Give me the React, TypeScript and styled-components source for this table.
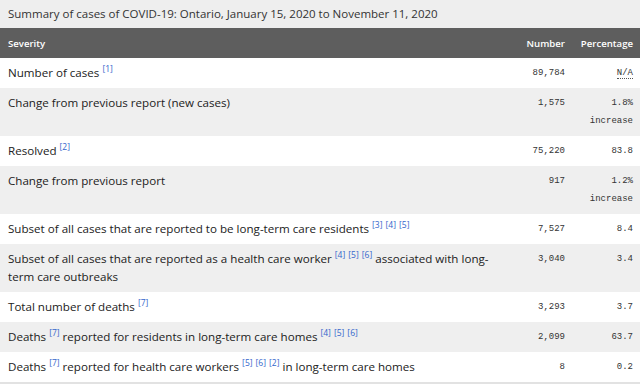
import React from "react"
import styled, { createGlobalStyle } from "styled-components"

const GlobalStyle = createGlobalStyle`
    body {
        margin: 0;
        background: #ffffff;
        font-family: "Open Sans", "Liberation Sans", sans-serif;
    }
`

const Table = styled.table`
    width: 640px;
    border-collapse: collapse;
    table-layout: fixed;
    border-bottom: 2px solid #e2e2e2;
`

const Caption = styled.caption`
    text-align: left;
    background-color: #eeeeee;
    color: #333333;
    font-size: 11.5px;
    line-height: 28px;
    padding: 0 8px;
`

const Th = styled.th<{ $right?: boolean }>`
    background-color: #5e5e5e;
    color: #ffffff;
    font-size: 9.6px;
    font-weight: 600;
    height: 30px;
    padding: 0 7px 0 8px;
    text-align: ${(p) => (p.$right ? "right" : "left")};
`

const Tr = styled.tr<{ $striped: boolean }>`
    background-color: ${(p) => (p.$striped ? "#efefef" : "#ffffff")};
`

const Label = styled.td`
    color: #222222;
    font-size: 11.6px;
    line-height: 18px;
    padding: 6px 8px 6px 8px;
    vertical-align: top;
`

const Num = styled.td`
    color: #333333;
    font-family: "Liberation Mono", "DejaVu Sans Mono", monospace;
    font-size: 9px;
    line-height: 18px;
    padding: 6px 7px 6px 8px;
    text-align: right;
    vertical-align: top;
`

const Sup = styled.sup`
    color: #3366cc;
    font-size: 8.5px;
    line-height: 0;
`

const Abbr = styled.span`
    border-bottom: 1px dotted #555555;
`

type Row = {
    label: React.ReactNode
    number: string
    pct: React.ReactNode
}

const Ref = ({ n }: { n: number }) => <Sup>[{n}]</Sup>

const rows: Row[] = [
    { label: <>Number of cases <Ref n={1} /></>, number: "89,784", pct: <Abbr>N/A</Abbr> },
    { label: "Change from previous report (new cases)", number: "1,575", pct: "1.8% increase" },
    { label: <>Resolved <Ref n={2} /></>, number: "75,220", pct: "83.8" },
    { label: "Change from previous report", number: "917", pct: "1.2% increase" },
    {
        label: <>Subset of all cases that are reported to be long-term care residents <Ref n={3} /> <Ref n={4} /> <Ref n={5} /></>,
        number: "7,527",
        pct: "8.4",
    },
    {
        label: <>Subset of all cases that are reported as a health care worker <Ref n={4} /> <Ref n={5} /> <Ref n={6} /> associated with long-term care outbreaks</>,
        number: "3,040",
        pct: "3.4",
    },
    { label: <>Total number of deaths <Ref n={7} /></>, number: "3,293", pct: "3.7" },
    {
        label: <>Deaths <Ref n={7} /> reported for residents in long-term care homes <Ref n={4} /> <Ref n={5} /> <Ref n={6} /></>,
        number: "2,099",
        pct: "63.7",
    },
    {
        label: <>Deaths <Ref n={7} /> reported for health care workers <Ref n={5} /> <Ref n={6} /> <Ref n={2} /> in long-term care homes</>,
        number: "8",
        pct: "0.2",
    },
]

const App = () => {
    return (
        <>
            <GlobalStyle />
            <Table>
                <Caption>Summary of cases of COVID-19: Ontario, January 15, 2020 to November 11, 2020</Caption>
                <colgroup>
                    <col />
                    <col style={{ width: 64 }} />
                    <col style={{ width: 68 }} />
                </colgroup>
                <thead>
                    <tr>
                        <Th>Severity</Th>
                        <Th $right>Number</Th>
                        <Th $right>Percentage</Th>
                    </tr>
                </thead>
                <tbody>
                    {rows.map((r, i) => (
                        <Tr key={i} $striped={i % 2 === 1}>
                            <Label>{r.label}</Label>
                            <Num>{r.number}</Num>
                            <Num>{r.pct}</Num>
                        </Tr>
                    ))}
                </tbody>
            </Table>
        </>
    )
}

export default App
